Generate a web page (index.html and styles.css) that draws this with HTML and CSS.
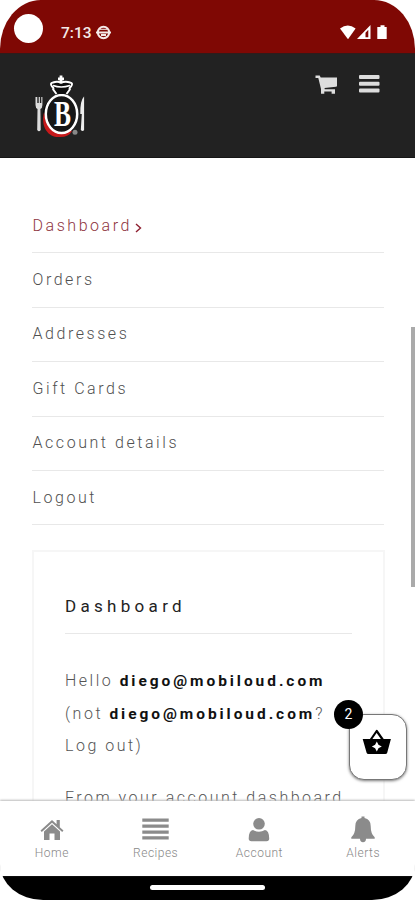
FILE: index.html
```html
<!DOCTYPE html>
<html lang="en">
<head>
<meta charset="utf-8">
<title>Dashboard</title>
<link rel="stylesheet" href="styles.css">
</head>
<body>
<div class="phone">
  <header class="status">
    <span class="camera"></span>
    <span class="time">7:13</span>
    <svg class="globe" width="15" height="15" viewBox="0 0 15 15"><circle cx="7.5" cy="7.5" r="5.700" fill="none" stroke="#f4e9e8" stroke-width="2"/><path d="M0 7.500h15M5 10h5" stroke="#f4e9e8" stroke-width="2"/><path d="M4 4.300h7" stroke="#f4e9e8" stroke-width="1"/></svg>
    <svg class="signals" width="48" height="15" viewBox="0 0 48 15" fill="#fff"><path d="M0 3.5Q7.8-2.5 15.6 3.5L8 14.2Z"/><path fill-rule="evenodd" d="M17 14L30.5 0V14ZM25.5 7.8V12.3H28.3V4.8Z"/><path d="M38.5 2h2V.3h4V2h2.2V14h-9.4V2Z"/></svg>
  </header>
  <div class="masthead">
    <svg class="logo" width="52" height="64" viewBox="0 0 52 64">
      <ellipse cx="25" cy="41" rx="17.5" ry="20" fill="#080808"/>
      <path d="M9 37C5 54 15 63 25 62Q34 62 37 56L33 54Q18 62 11 47Z" fill="#c6191b"/>
      <ellipse cx="26.5" cy="39" rx="15.7" ry="19" fill="#171717" stroke="#fff" stroke-width="2.5"/>
      <path d="M21.500 19L18.200 14.500Q19 13 17 11.500Q14.500 8 18 7.500Q22 6 26 7.500Q31 6 35 7.500Q38.500 8 36 11.500Q34 13 34.800 14.500L31.500 19" fill="#101010" stroke="#fff" stroke-width="2"/>
      <path d="M18 10.500Q26 13.500 35 10.500" fill="none" stroke="#fff" stroke-width="1.500"/><path d="M26 .5v8M23 3.800h6" stroke="#fff" stroke-width="2.800"/>
      <path d="M.5 22v8q0 3 2 4l-.3 21q1.800 2.400 3.500 0L5.400 34q2-1 2-4v-8H6.300v6H4.900v-6H3.700v6H2.300v-6Z" fill="#ddd"/>
      <path d="M49 21.500q-4 4-3.700 17.500h1.500l-1 16q2 2.200 3.300 0V21.500Z" fill="#eee"/>
      <text x="19" y="50.500" class="logo-b" textLength="17" lengthAdjust="spacingAndGlyphs">B</text>
      <circle cx="40" cy="57.3" r="2.5" fill="#888"/>
    </svg>
    <div class="tools">
      <svg width="23" height="20" viewBox="0 0 23 20" fill="#ddd"><path d="M.5.5h4.200l1 2H22v8.300q0 1-1 1L9.500 13l.3 1.200H20v4.600h-3.400v-2.400H9.300v2.400H6V14L3.300 3H.5Z"/></svg>
      <svg width="21" height="18" viewBox="0 0 21 18" fill="#ddd"><rect width="20.5" height="4" rx="1"/><rect y="6.7" width="20.5" height="4" rx="1"/><rect y="13.400" width="20.5" height="4" rx="1"/></svg>
    </div>
  </div>
  <main class="page">
    <ul class="menu">
      <li class="active">Dashboard<svg width="7" height="10" viewBox="0 0 7 10"><path d="M1 1l4.5 4L1 9" fill="none" stroke="#8e1f30" stroke-width="1.4"/></svg></li>
      <li>Orders</li>
      <li>Addresses</li>
      <li>Gift Cards</li>
      <li>Account details</li>
      <li>Logout</li>
    </ul>
    <section class="card">
      <h1>Dashboard</h1>
      <p>Hello <b>diego@mobiloud.com</b><br>(not <b>diego@mobiloud.com</b>?<br>Log out)</p>
      <p class="from">From your account dashboard</p>
    </section>
    <span class="scrollbar"></span>
    <div class="basket">
      <span class="count">2</span>
      <svg width="30" height="26" viewBox="0 0 30 26"><path d="M8.5 11L14.7 2L21 11" fill="none" stroke="#000" stroke-width="2.2" stroke-linejoin="round"/><path d="M.7 10h28.2l-3.7 13.7q-.3 1.3-2 1.3H6.5q-1.500 0-1.900-1.300Z"/><path d="M14.800 14l1.200 2.300 2.300 1.200-2.300 1.200-1.200 2.300-1.200-2.300-2.300-1.200 2.300-1.200Z" fill="#fff" stroke="#fff" stroke-width="1.400"/></svg>
    </div>
  </main>
  <nav class="tabs">
    <a><svg width="24" height="26" viewBox="0 0 24 26"><path d="M.5 13.500L12 3l4.600 4.200V3h3.200v7.200l3.700 3.300-1.300 1.400L12 5.700 1.800 14.900Z"/><path d="M12 7.200l8 7.200V23h-5.500v-6.500h-5V23H4v-8.600Z"/></svg><span>Home</span></a>
    <a><svg width="27" height="26" viewBox="0 0 27 26"><path d="M.3 1.500h26.400v3.300H.3ZM.3 7.500h26.400v3.300H.3ZM.3 13.500h26.400v3.300H.3ZM.3 19.300h26.400v3.300H.3Z"/></svg><span>Recipes</span></a>
    <a><svg width="22" height="26" viewBox="0 0 22 26"><circle cx="11" cy="6.800" r="5.800"/><path d="M5 13q6 3.500 12 0 4.200.8 4.200 8.500 0 2.700-2.700 2.700H3.400Q.7 24.200.7 21.500.7 13.800 5 13Z"/></svg><span>Account</span></a>
    <a><svg width="24" height="28" viewBox="0 0 24 28"><path d="M10.500 2V.5h3V2q6.200 1.300 6.200 8 0 8 4 11.300v1.500H15q0 3.400-3 3.400t-3-3.400H.3v-1.500q4-3.300 4-11.300 0-6.700 6.200-8Z"/></svg><span>Alerts</span></a>
  </nav>
  <footer class="gesture"><span></span></footer>
</div>
</body>
</html>
```
FILE: styles.css
```css
* { box-sizing: border-box; }
body { margin: 0; background: #fff; font-family: Roboto, "Liberation Sans", sans-serif; }
.phone { width: 415px; height: 900px; display: flex; flex-direction: column; overflow: hidden; border-radius: 41px 41px 43px 43px / 49px 49px 36px 36px; }
.status { height: 53px; flex: none; display: flex; background: #7f0804; padding: 0 27px 0 14px; }
.camera { width: 29px; height: 29px; margin-top: 14px; border-radius: 50%; background: #fff; }
.time { margin: 24px 0 0 18px; width: 30px; color: #f4e9e8; font-size: 15.5px; font-weight: 500; line-height: 18px; }
.globe { margin: 25px 0 0 5px; }
.signals { margin: 25px 0 0 auto; }
.masthead { height: 105px; flex: none; display: flex; justify-content: space-between; background: #222; border-top: 1px solid #301b1a; border-bottom: 1px solid #161616; padding: 21px 35px 0 35px; }
.logo-b { font: bold 35px "Liberation Serif", serif; fill: #fff; }
.tools { display: flex; gap: 21px; align-items: flex-start; }
.page { flex: 1; min-height: 0; overflow: hidden; position: relative; padding: 41px 30px 0 32px; }
.menu { list-style: none; margin: 0; padding: 0; width: 352px; }
.menu li { height: 54.4px; border-bottom: 1px solid #e8e8e8; color: #505050; font-size: 16px; font-weight: 300; letter-spacing: 2.55px; line-height: 52px; display: flex; align-items: center; padding-left: .5px; }
.menu .active { color: #8e3440; }
.menu svg { margin: 4px 0 0 3px; }
.card { width: 353px; height: 400px; margin-top: 25px; border: 2px solid #f6f6f6; padding: 35px 31px 0; }
h1 { margin: 0 0 31px; height: 47px; border-bottom: 1px solid #e8e8e8; color: #222; font-size: 17px; font-weight: 400; letter-spacing: 4.3px; line-height: 39px; }
p { margin: 0; color: #555; font-size: 16px; font-weight: 300; letter-spacing: 2.5px; line-height: 32.2px; white-space: nowrap; }
p b { color: #111; font-weight: 700; font-size: 15.5px; letter-spacing: 2.95px; }
.from { margin-top: 20px; }
.scrollbar { position: absolute; right: 0; top: 169px; width: 4px; height: 260px; background: #aaa; }
.basket { position: absolute; left: 349px; top: 556px; width: 58px; height: 66px; border-radius: 15px; border: 1px solid #777; background: #fff; box-shadow: 0 1px 3px #777; display: flex; justify-content: center; padding: 14px 3px 0 0; }
.count { position: absolute; left: -16px; top: -15px; width: 29px; height: 29px; border-radius: 50%; background: #000; color: #fff; font-size: 14px; line-height: 28px; text-align: center; }
.tabs { position: relative; height: 75px; flex: none; display: grid; grid-template-columns: repeat(4, 1fr); background: #fff; box-shadow: 0 -1px 2px #bbb; }
.tabs a { display: flex; flex-direction: column; align-items: center; padding-top: 15px; }
.tabs svg { height: 28px; fill: #8b8b8b; }
.tabs span { margin-top: 1px; color: #888; font-size: 12px; font-weight: 300; line-height: 16px; letter-spacing: .5px; }
.gesture { height: 24px; flex: none; display: flex; justify-content: center; background: #000; }
.gesture span { width: 115px; height: 5px; margin-top: 9px; border-radius: 3px; background: #fff; }
```
